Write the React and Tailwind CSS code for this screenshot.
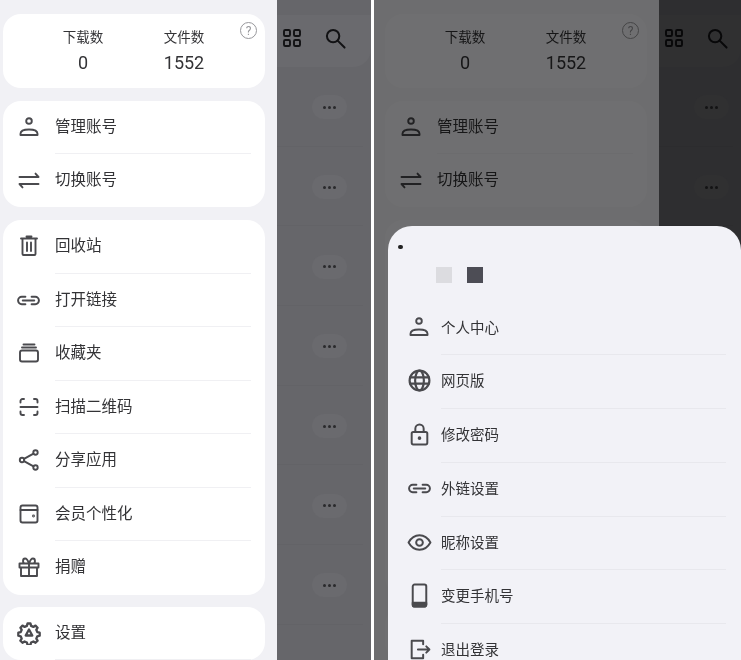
const FONT = '[font-family:Roboto,"Noto_Sans_CJK_SC",sans-serif]';

// All menu icons share a 24 box and the same stroke so they can be sized from one place.
function Icon({ size = 24, width = 1.9, children }) {
  return (
    <svg width={size} height={size} viewBox="0 0 24 24" fill="none" stroke="#4a4a4e" strokeWidth={width} strokeLinecap="round" strokeLinejoin="round">
      {children}
    </svg>
  );
}

const PersonIcon = () => (
  <Icon>
    <circle cx="12" cy="6" r="2.800" />
    <path d="M3.500 20v-1.200c0-2.800 4-4.300 8.500-4.300s8.500 1.500 8.500 4.300V20z" />
  </Icon>
);
const SwapIcon = () => (
  <Icon>
    <path d="M2.500 9h19l-3-3.400M21.500 16h-19l3 3.400" />
  </Icon>
);
const TrashIcon = () => (
  <Icon>
    <path d="M4 4.500h16M5.500 4.500v15.500a1 1 0 0 0 1 1h11a1 1 0 0 0 1-1V4.500M9.500 2.500h5M10 8.500v8.500M14 8.500v8.500" />
  </Icon>
);
const LinkIcon = () => (
  <Icon size={25}>
    <path d="M9 8.500H5.500a3.500 3.500 0 0 0 0 7H9M15 8.500h3.500a3.500 3.500 0 0 1 0 7H15M6.500 12h11" />
  </Icon>
);
const CollectionIcon = () => (
  <Icon>
    <path d="M6.500 3.500h11M5 6.500h14" />
    <rect x="3" y="9.500" width="18" height="11" rx="2" />
  </Icon>
);
const ScanIcon = () => (
  <Icon>
    <path d="M3.500 7.500V6a2 2 0 0 1 2-2H7M17 4h1.500a2 2 0 0 1 2 2v1.500M3.500 12h17M3.500 16.500V18a2 2 0 0 0 2 2H7M17 20h1.500a2 2 0 0 0 2-2v-1.500" />
  </Icon>
);
const ShareIcon = () => (
  <Icon>
    <circle cx="18.500" cy="4.500" r="2.200" />
    <circle cx="5" cy="12" r="2.200" />
    <circle cx="18.500" cy="19.500" r="2.200" />
    <path d="M7 10.900l9.500-5.300M7 13.100l9.500 5.300" />
  </Icon>
);
const WalletIcon = () => (
  <Icon>
    <rect x="3.500" y="3.500" width="17" height="17" rx="2" />
    <path d="M3.500 8h17" />
    <circle cx="16.500" cy="14" r="0.500" />
  </Icon>
);
const GiftIcon = () => (
  <Icon>
    <path d="M2.500 8.500h19v4h-19zM4 12.500v8.500h16v-8.500M12 8.500V21M12 8.500c-1-3-2.300-5-4-5-2.600 0-2.600 5 0 5M12 8.500c1-3 2.300-5 4-5 2.600 0 2.600 5 0 5" />
  </Icon>
);
const GearIcon = () => (
  <Icon width={2.300}>
    <path d="M10.500 2.500h3l.6 2.400 2.300 1 2.100-1.300 2.100 2.100-1.300 2.100 1 2.300 2.400.6v3l-2.400.6-1 2.300 1.300 2.100-2.100 2.100-2.100-1.300-2.300 1-.6 2.400h-3l-.6-2.400-2.300-1-2.100 1.300-2.100-2.100 1.300-2.100-1-2.300-2.400-.6v-3l2.400-.6 1-2.300-1.300-2.100 2.100-2.100 2.100 1.300 2.300-1z" />
    <path d="M12 8.500l3.300 6h-6.600z" />
  </Icon>
);
const GlobeIcon = () => (
  <Icon size={25} width={2.100}>
    <circle cx="12" cy="12" r="9.500" />
    <ellipse cx="12" cy="12" rx="4.200" ry="9.500" />
    <path d="M3 9h18M3 15h18" />
  </Icon>
);
const LockIcon = () => (
  <Icon size={25}>
    <rect x="4.500" y="9.500" width="15" height="12" rx="1.500" />
    <path d="M8 9.500V6.500a4 4 0 0 1 8 0v3" />
    <circle cx="12" cy="15.500" r="0.800" fill="#4a4a4e" />
  </Icon>
);
const EyeIcon = () => (
  <Icon size={25}>
    <path d="M1.500 12C4 7.500 7.700 5 12 5s8 2.500 10.500 7c-2.500 4.500-6.200 7-10.500 7s-8-2.500-10.500-7z" />
    <circle cx="12" cy="12" r="3.200" />
  </Icon>
);
const PhoneIcon = () => (
  <Icon size={25}>
    <rect x="5.500" y="1.500" width="13" height="21" rx="1.800" />
    <path d="M5.500 19h13v1.800a1.800 1.800 0 0 1-1.800 1.800H7.300a1.800 1.800 0 0 1-1.800-1.800z" fill="#4a4a4e" />
  </Icon>
);
const LogoutIcon = () => (
  <Icon size={25}>
    <path d="M15.500 7V3.500h-11v17h11V17M10.500 12h11M18.500 9l3 3-3 3" />
  </Icon>
);

const DRAWER_GROUPS = [
  { compact: true, items: [['管理账号', PersonIcon], ['切换账号', SwapIcon]] },
  {
    items: [
      ['回收站', TrashIcon],
      ['打开链接', LinkIcon],
      ['收藏夹', CollectionIcon],
      ['扫描二维码', ScanIcon],
      ['分享应用', ShareIcon],
      ['会员个性化', WalletIcon],
      ['捐赠', GiftIcon],
    ],
  },
];

const SHEET_ITEMS = [
  ['个人中心', PersonIcon],
  ['网页版', GlobeIcon],
  ['修改密码', LockIcon],
  ['外链设置', LinkIcon],
  ['昵称设置', EyeIcon],
  ['变更手机号', PhoneIcon],
  ['退出登录', LogoutIcon],
];

function MenuRow({ label, icon: RowIcon, last, compact }) {
  return (
    <div className={`flex shrink-0 ${compact ? 'h-[53px]' : 'h-[53.500px]'}`}>
      <div className="flex w-[52px] shrink-0 justify-center pr-px pt-[14px]">
        <RowIcon />
      </div>
      <div className={`flex min-w-0 flex-1 pt-[15px] ${last ? '' : 'border-b border-[#f0f0f3]'}`}>
        <span className="text-[15.500px] leading-[23px] text-[#333336]">{label}</span>
      </div>
    </div>
  );
}

function Drawer({ card = 'bg-white' }) {
  return (
    <div className="flex h-[660px] w-[285px] shrink-0 flex-col gap-[13px] bg-[#f1f1f5] pl-[11px] pr-[12px] pt-[14px]">
      <div className={`relative flex h-[74px] shrink-0 rounded-[18px] pt-[13px] ${card}`}>
        <div className="ml-[40px] flex w-[80px] flex-col items-center">
          <span className="text-[13.500px] leading-[20px] text-[#333336]">下载数</span>
          <span className="mt-[4px] text-[18px] leading-[24px] text-[#333336]">0</span>
        </div>
        <div className="ml-[21px] flex w-[80px] flex-col items-center">
          <span className="text-[13.500px] leading-[20px] text-[#333336]">文件数</span>
          <span className="mt-[4px] text-[18px] leading-[24px] text-[#333336]">1552</span>
        </div>
        <div className="absolute right-[8px] top-[8px] flex h-[17px] w-[17px] items-center justify-center rounded-full border-[1.500px] border-[#98989c] text-[12px] leading-none text-[#98989c]">
          ?
        </div>
      </div>
      {DRAWER_GROUPS.map((group, i) => (
        <div key={i} className={`shrink-0 rounded-[18px] pr-[14px] ${card}`}>
          {group.items.map(([label, icon], j) => (
            <MenuRow key={label} label={label} icon={icon} compact={group.compact} last={j === group.items.length - 1} />
          ))}
        </div>
      ))}
      <div className={`-mt-px flex-1 rounded-[18px] pr-[14px] ${card}`}>
        <MenuRow label="设置" icon={GearIcon} />
      </div>
    </div>
  );
}

function Backdrop() {
  return (
    <div className="min-w-0 flex-1 bg-[#66666a] pt-[15px]">
      <div className="flex h-[52px] items-start rounded-br-[18px] bg-[#6a6a6e] pl-[6px] pt-[14px]">
        <svg width="18" height="18" viewBox="0 0 18 18" fill="none" stroke="#121214" strokeWidth="1.900">
          <rect x="1" y="1" width="6" height="6" rx="1.300" />
          <rect x="11" y="1" width="6" height="6" rx="1.300" />
          <rect x="1" y="11" width="6" height="6" rx="1.300" />
          <rect x="11" y="11" width="6" height="6" rx="1.300" />
        </svg>
        <svg className="ml-[24px] -mt-px" width="21" height="21" viewBox="0 0 22 22" fill="none" stroke="#121214" strokeWidth="2.100" strokeLinecap="round">
          <circle cx="8.500" cy="8.500" r="6.500" />
          <path d="M13.500 13.500l7 7" />
        </svg>
      </div>
      {[0, 1, 2, 3, 4, 5, 6].map((n) => (
        <div key={n} className="mr-[8px] flex h-[79.700px] items-center border-b border-[#636367] pl-[35px] pt-[2px]">
          <div className="flex h-[24px] w-[35px] items-center justify-center gap-[2px] rounded-full bg-[#6a6a6e]">
            <span className="h-[3px] w-[3px] rounded-full bg-[#2a2a2c]" />
            <span className="h-[3px] w-[3px] rounded-full bg-[#2a2a2c]" />
            <span className="h-[3px] w-[3px] rounded-full bg-[#2a2a2c]" />
          </div>
        </div>
      ))}
    </div>
  );
}

function Sheet() {
  return (
    <div className="absolute bottom-0 left-[14px] right-0 top-[226px] overflow-hidden rounded-t-[24px] bg-[#f2f2f7] pr-[15px]">
      <div className="relative flex h-[75.500px] gap-[15px] pl-[48px] pt-[41px]">
        <span className="absolute left-[10px] top-[19px] h-[4px] w-[5px] rounded-sm bg-[#222]" />
        <span className="h-[16px] w-[16px] bg-[#dcdce0]" />
        <span className="h-[16px] w-[16px] bg-[#4d4d55]" />
      </div>
      {SHEET_ITEMS.map(([label, RowIcon], i) => (
        <div key={label} className="flex h-[53.800px]">
          <div className="flex w-[53px] shrink-0 justify-center pl-[9px] pt-[13px]">
            <RowIcon />
          </div>
          <div className={`flex-1 pt-[14px] ${i === SHEET_ITEMS.length - 1 ? '' : 'border-b border-[#e8e8ed]'}`}>
            <span className="text-[14.500px] leading-[23px] text-[#333336]">{label}</span>
          </div>
        </div>
      ))}
    </div>
  );
}

export default function App() {
  return (
    <div className={`flex h-[660px] w-[741px] gap-[3px] overflow-hidden bg-white blur-[0.300px] ${FONT}`}>
      <div className="flex h-[660px] w-[371px] shrink-0 overflow-hidden">
        <div className="-ml-[8px] flex min-w-0 flex-1">
          <Drawer />
          <Backdrop />
        </div>
      </div>
      <div className="relative flex h-[660px] flex-1 overflow-hidden">
        <Drawer card="bg-[#f7f7fa]" />
        <Backdrop />
        <div className="absolute inset-0 bg-black/55" />
        <Sheet />
      </div>
    </div>
  );
}
